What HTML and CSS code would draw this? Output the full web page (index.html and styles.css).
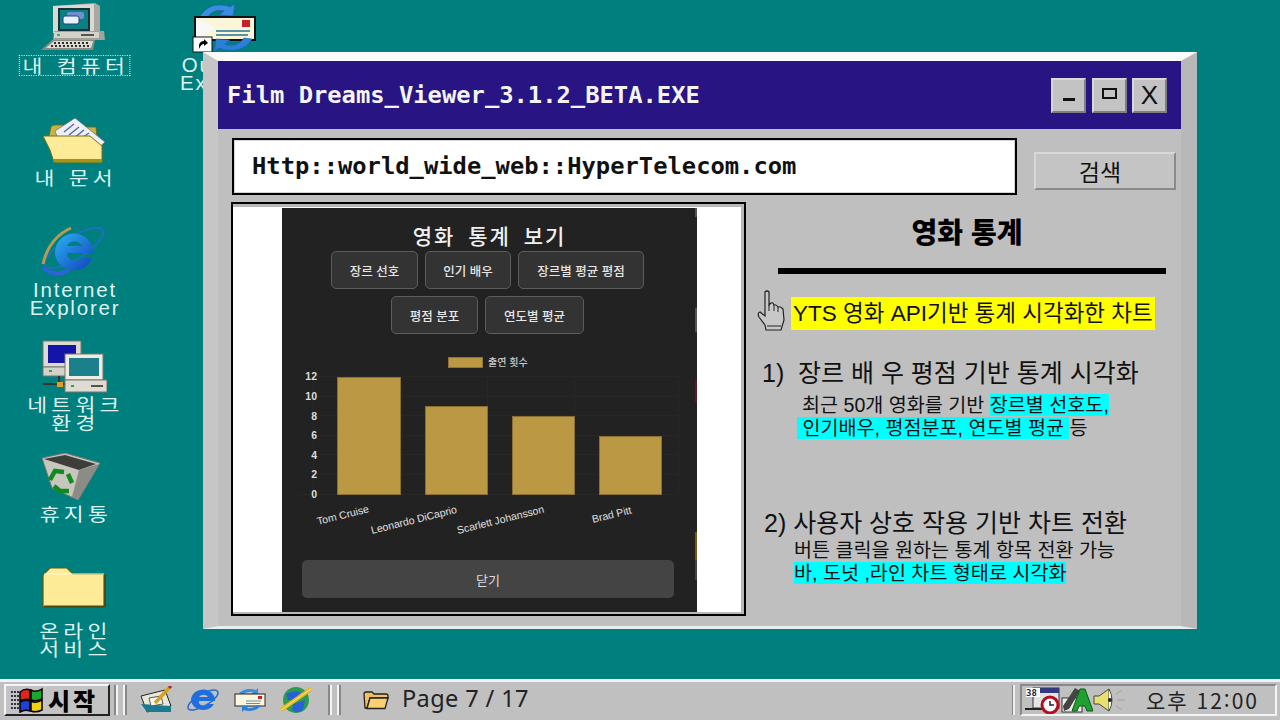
FILE: index.html
```html
<!DOCTYPE html>
<html lang="ko">
<head>
<meta charset="utf-8">
<title>Film Dreams Viewer</title>
<link rel="stylesheet" href="styles.css">
</head>
<body>
<main class="desktop">
  <div class="icon icon-computer">
    <svg class="glyph" width="66" height="50" viewBox="0 0 66 50">
      <path d="M12 3 L54 0 L59 3 L59 30 L12 30Z" fill="#a8a8a0"/>
      <path d="M12 3 L53 1 L53 30 L12 30Z" fill="#d9d9d1"/>
      <rect x="17" y="5" width="32" height="23" fill="#17323c"/>
      <rect x="19" y="7" width="28" height="19" fill="#0c8080"/>
      <rect x="26" y="9" width="17" height="7" rx="2" fill="#6f8fd0"/>
      <rect x="22" y="13" width="16" height="8" rx="2" fill="#e8f0f8" stroke="#20408a"/>
      <path d="M13 28 H63 L64 37 L12 37Z" fill="#a2a29a"/>
      <path d="M13 29 H58 L58 35 H13Z" fill="#d2d2ca"/>
      <rect x="16" y="31" width="3" height="2" fill="#28c050"/>
      <rect x="40" y="31" width="13" height="2" fill="#55554f"/>
      <path d="M0 47 L11 37 H54 L52 47Z" fill="#8b8b84"/>
      <path d="M5 45 L13 38 H52 L50 45Z" fill="#dcdcd4"/>
      <path d="M10 43 H48 M13 40 H49" stroke="#2f2f2f" stroke-width="2" stroke-dasharray="2 2"/>
    </svg>
    <div class="label label-focus">내 컴퓨터</div>
  </div>

  <div class="icon icon-outlook">
    <svg class="glyph" width="66" height="50" viewBox="0 0 66 50">
      <path d="M7 15 C13 3 26 -1 38 4 L43 1 L41 13 L27 12 L32 8 C24 6 18 9 14 17Z" fill="#3a8de0" stroke="#1c5cae" stroke-width=".6"/>
      <rect x="2" y="13" width="62" height="25" fill="#111"/>
      <rect x="4" y="15" width="58" height="21" fill="#fbf6d8"/>
      <path d="M4 15 L24 25 L4 36Z" fill="#f8f8f8"/>
      <rect x="50" y="17" width="8" height="7" fill="#c81f2c"/>
      <path d="M24 28 H58 M24 32 H56" stroke="#5a92a8" stroke-width="2"/>
      <path d="M60 36 C54 47 40 50 27 45 L22 49 L24 36 L38 37 L33 41 C41 44 48 41 52 35Z" fill="#2c7fd8" stroke="#1c5cae" stroke-width=".6"/>
      <rect x="1" y="34" width="19" height="15" fill="#fff" stroke="#111"/>
      <path d="M7 46 L7 42 Q8 38 12 38 L12 36 L16 40 L12 43 L12 41 Q9 41 7 46Z" fill="#000"/>
    </svg>
    <div class="label label-out">Outlook<br>Express</div>
  </div>

  <div class="icon icon-docs">
    <svg class="glyph" width="64" height="46" viewBox="0 0 64 46">
      <path d="M7 18 L9 9 Q10 7 13 7 H22 L25 9 H54 L56 30 H8Z" fill="#c9b344" stroke="#6f6410" stroke-width=".8"/>
      <path d="M13 13 L33 0 L63 24 L52 34 L18 26Z" fill="#eef0f8" stroke="#6a6a6a" stroke-width=".7"/>
      <path d="M22 14 L32 6 M27 17 L37 9 M32 20 L42 12 M37 22 L47 15" stroke="#5666aa" stroke-width="1.4"/>
      <path d="M1 18 H48 L60 28 L60 44 H12 L8 32Z" fill="#fdeb98" stroke="#7b7014" stroke-width="1"/>
      <path d="M12 44.500 H60 V41 H11Z" fill="#a49316"/>
    </svg>
    <div class="label">내 문서</div>
  </div>

  <div class="icon icon-ie">
    <svg class="glyph" width="66" height="50" viewBox="0 0 66 50">
      <defs>
        <linearGradient id="ieg" x1="0" y1="0" x2="1" y2="1">
          <stop offset="0" stop-color="#28b4f0"/>
          <stop offset="1" stop-color="#1440c0"/>
        </linearGradient>
      </defs>
      <ellipse cx="33" cy="22" rx="34" ry="11" transform="rotate(-32 33 22)" fill="none" stroke="#2a6bd0" stroke-width="2" opacity=".75"/>
      <path d="M14 26 a19 19 0 1 1 38 1 h-26 a9 8 0 0 0 16 5 h9 a19 18 0 0 1 -37 -6Z M26 20 h15 a8 7 0 0 0 -15 0Z" fill="url(#ieg)" fill-rule="evenodd"/>
      <path d="M2 38 Q8 12 30 2" fill="none" stroke="#b79a54" stroke-width="3"/>
      <path d="M2 42 Q14 52 28 44" fill="none" stroke="#2b64d6" stroke-width="4"/>
    </svg>
    <div class="label label-latin">Internet<br>Explorer</div>
  </div>

  <div class="icon icon-network">
    <svg class="glyph" width="66" height="54" viewBox="0 0 66 54">
      <rect x="2" y="1" width="38" height="26" fill="#dedcd2" stroke="#77776f"/>
      <rect x="7" y="5" width="28" height="18" fill="#1414a8"/>
      <rect x="2" y="27" width="36" height="9" fill="#d4d2c8" stroke="#77776f"/>
      <rect x="8" y="30" width="3" height="2" fill="#18b040"/>
      <path d="M18 36 V44 M2 44 H40" stroke="#333" stroke-width="2"/>
      <rect x="16" y="42" width="6" height="5" fill="#e0a020"/>
      <rect x="24" y="14" width="38" height="26" fill="#eeece2" stroke="#77776f"/>
      <rect x="28" y="18" width="30" height="18" fill="#1c7f8c"/>
      <rect x="24" y="40" width="42" height="12" fill="#dedcd2" stroke="#77776f"/>
      <rect x="30" y="45" width="3" height="2" fill="#18b040"/>
      <rect x="50" y="45" width="12" height="2" fill="#55554f"/>
    </svg>
    <div class="label">네트워크<br>환경</div>
  </div>

  <div class="icon icon-recycle">
    <svg class="glyph" width="60" height="48" viewBox="0 0 60 48">
      <path d="M1 5 L24 0 L59 10 L37 47 L11 35Z" fill="#c6c6bc" stroke="#77776f"/>
      <path d="M3 6 L24 2 L55 11 L38 17Z" fill="#3d3d3a"/>
      <path d="M38 17 L58 11 L37 47 L31 44Z" fill="#8c8c86"/>
      <g fill="none" stroke="#108a20" stroke-width="4.500">
        <path d="M9 27 L14 18 L23 19"/>
        <path d="M13 33 L19 38 L28 38"/>
        <path d="M27 21 L31 30"/>
      </g>
    </svg>
    <div class="label">휴지통</div>
  </div>

  <div class="icon icon-online">
    <svg class="glyph" width="64" height="41" viewBox="0 0 64 41">
      <path d="M1 40 V8 L8 1 H25 L31 7 H62 V40Z" fill="#fdeb98" stroke="#5f5a12" stroke-width="1.2"/>
      <path d="M2 7 H62" stroke="#fffbd0"/>
      <path d="M2 39.500 H63 M63 8 V40" stroke="#4b4a10" stroke-width="2"/>
    </svg>
    <div class="label">온라인<br>서비스</div>
  </div>

  <section class="window">
    <header class="titlebar">
      <h1 class="title">Film Dreams_Viewer_3.1.2_BETA.EXE</h1>
      <div class="controls">
        <button class="ctl"><span class="ctl-min"></span></button>
        <button class="ctl ctl-mid"><span class="ctl-max"></span></button>
        <button class="ctl ctl-x">X</button>
      </div>
    </header>

    <div class="addressrow">
      <div class="address">Http::world_wide_web::HyperTelecom.com</div>
      <button class="search">검색</button>
    </div>

    <div class="content">
      <div class="frame">
        <div class="modal">
          <h2 class="modal-title">영화 통계 보기</h2>
          <div class="tabs">
            <span class="tab tab-a">장르 선호</span>
            <span class="tab tab-d">인기 배우</span>
            <span class="tab tab-b">장르별 평균 평점</span>
          </div>
          <div class="tabs tabs-2">
            <span class="tab tab-a">평점 분포</span>
            <span class="tab tab-c">연도별 평균</span>
          </div>
          <svg class="chart" width="415" height="192" viewBox="0 0 415 192">
            <rect x="165.500" y="2.500" width="34" height="10" fill="#bb9944" stroke="#8f7433"/>
            <text x="205" y="11" class="legend">출연 횟수</text>
            <g stroke="#272727" fill="none">
              <path d="M30 21.500 H395 M30 41.500 H395 M30 60.500 H395 M30 80.500 H395 M30 99.500 H395 M30 119.500 H395"/>
              <path d="M16 139.500 H395 M30.500 21 V139 M117.500 21 V139 M204.500 21 V139 M291.500 21 V139 M395.500 21 V139"/>
            </g>
            <g class="ytick" text-anchor="end">
              <text x="34" y="25">12</text>
              <text x="34" y="45">10</text>
              <text x="34" y="65">8</text>
              <text x="34" y="84">6</text>
              <text x="34" y="104">4</text>
              <text x="34" y="123">2</text>
              <text x="34" y="143">0</text>
            </g>
            <g fill="#bb9944" stroke="#8a6f30">
              <rect x="54.500" y="22.500" width="63" height="117"/>
              <rect x="142.500" y="51.500" width="62" height="88"/>
              <rect x="229.500" y="61.500" width="62" height="78"/>
              <rect x="316.500" y="81.500" width="62" height="58"/>
            </g>
            <g class="xtick">
              <text transform="translate(35 170) rotate(-14)">Tom Cruise</text>
              <text transform="translate(89 179) rotate(-14)">Leonardo DiCaprio</text>
              <text transform="translate(175 179) rotate(-14)">Scarlett Johansson</text>
              <text transform="translate(310 168) rotate(-14)">Brad Pitt</text>
            </g>
          </svg>
          <button class="close">닫기</button>
        </div>
      </div>

      <article class="notes">
        <h2 class="notes-title">영화 통계</h2>
        <hr class="rule">
        <div class="lead">
          <svg class="hand" width="28" height="42" viewBox="0 0 28 42">
            <path d="M8 2 Q10 0 12 2 L12 15 L14 13 Q16 12 17 15 Q19 14 21 17 Q23 16 26 19 L27 30 L24 40 H9 L8 35 L2 27 Q0 23 3 22 L8 26Z" fill="#c8c8c8" stroke="#222" stroke-width="1.200"/>
            <path d="M12 15 V21 M17 15 V21 M21 17 V22 M10 36 H24" stroke="#222" stroke-width="1"/>
          </svg>
          <span class="mark-yellow">YTS 영화 API기반 통계 시각화한 차트</span>
        </div>
        <h3 class="point point-1"><span class="num">1)</span>장르 배 우 평점 기반 통계 시각화</h3>
        <p class="desc desc-1">최근 50개 영화를 기반 <span class="mark-cyan">장르별 선호도,</span></p>
        <p class="desc desc-1b"><span class="mark-cyan"> 인기배우, 평점분포, 연도별 평균 </span>등</p>
        <h3 class="point point-2">2) 사용자 상호 작용 기반 차트 전환</h3>
        <p class="desc desc-2">버튼 클릭을 원하는 통계 항목 전환 가능</p>
        <p class="desc desc-2"><span class="mark-cyan">바, 도넛 ,라인 차트 형태로 시각화</span></p>
      </article>
    </div>
  </section>
</main>

<footer class="taskbar">
  <button class="start">
    <svg width="34" height="26" viewBox="0 0 34 26">
      <path d="M1 5 H10 M1 9 H10 M1 13 H10 M1 17 H10 M1 21 H10" stroke="#334" stroke-width="2" stroke-dasharray="2 1"/>
      <path d="M10 5 Q15 1 20 3 L20 13 Q15 11 10 14Z" fill="#e02418" stroke="#000" stroke-width="1.500"/>
      <path d="M21 3 Q26 6 32 2 L32 12 Q26 15 21 13Z" fill="#18a830" stroke="#000" stroke-width="1.500"/>
      <path d="M10 15 Q15 12 20 14 L20 24 Q15 22 10 25Z" fill="#2040d8" stroke="#000" stroke-width="1.500"/>
      <path d="M21 14 Q26 17 32 13 L32 23 Q26 26 21 24Z" fill="#f0d010" stroke="#000" stroke-width="1.500"/>
    </svg>
    <span class="start-text">시작</span>
  </button>
  <span class="grip"></span>
  <div class="quick">
    <svg width="34" height="28" viewBox="0 0 34 28">
      <path d="M2 10 L26 4 L32 20 L8 26Z" fill="#e8e8d8" stroke="#222"/>
      <path d="M2 18 L8 26 L32 26 L32 20Z" fill="#1a7a90"/>
      <path d="M10 12 L22 10 L24 18 L12 20Z" fill="#f8f8e8" stroke="#555"/>
      <path d="M16 17 L30 2" stroke="#d8a020" stroke-width="3.500"/>
      <path d="M30 2 L32 0" stroke="#b02020" stroke-width="3"/>
    </svg>
    <svg width="34" height="28" viewBox="0 0 34 28">
      <ellipse cx="17" cy="14" rx="17" ry="6" transform="rotate(-30 17 14)" fill="none" stroke="#2a6bd0" stroke-width="1.500"/>
      <path d="M5 14 a12 11 0 1 1 24 1 h-16 a5 4 0 0 0 9 3 h6 a12 10 0 0 1 -23 -4Z M13 11 h9 a5 4 0 0 0 -9 0Z" fill="#1f6ee0" fill-rule="evenodd"/>
    </svg>
    <svg width="32" height="26" viewBox="0 0 32 26">
      <path d="M5 6 Q12 0 22 3 L24 1 L24 7 L17 7 L19 5 Q13 4 9 8Z" fill="#3a8de0"/>
      <rect x="1" y="7" width="30" height="12" fill="#fbf6e0" stroke="#222"/>
      <rect x="24" y="9" width="4" height="3" fill="#c81f2c"/>
      <path d="M12 14 H27 M12 16.500 H26" stroke="#5a92a8"/>
      <path d="M27 19 Q20 26 10 23 L8 25 L8 19 L15 19 L13 21 Q19 22 23 18Z" fill="#2c7fd8"/>
    </svg>
    <svg width="34" height="28" viewBox="0 0 34 28">
      <circle cx="17" cy="14" r="13" fill="#2e9c50"/>
      <path d="M7 8 Q14 4 22 6 L16 14 L9 14Z M14 18 L26 14 L24 24 Q18 28 13 24Z" fill="#2860d8"/>
      <path d="M2 24 L32 3" stroke="#e8b820" stroke-width="4"/>
      <path d="M2 24 L32 3" stroke="#f8e890" stroke-width="1"/>
    </svg>
  </div>
  <span class="grip"></span>
  <div class="task">
    <svg width="26" height="20" viewBox="0 0 26 20">
      <path d="M2 18 L1 4 Q1 2 3 2 H9 L11 4 H23 Q25 4 25 6 L25 8 H7 L4 18Z" fill="#f0c060" stroke="#222" stroke-width="1.300"/>
      <path d="M4 18.500 L7 8 H25 L22 18.500Z" fill="#fbd070" stroke="#222" stroke-width="1.300"/>
    </svg>
    <span class="task-text">Page 7 / 17</span>
  </div>
  <div class="tray-wrap">
    <span class="tray-grip"></span>
    <div class="tray">
      <svg width="36" height="28" viewBox="0 0 36 28">
        <rect x="8" y="2" width="26" height="20" fill="#e4e4e4" stroke="#334"/>
        <rect x="8" y="2" width="26" height="5" fill="#333a80"/>
        <rect x="1" y="2" width="14" height="9" fill="#fff"/>
        <text x="1" y="10" class="tray-mini">38</text>
        <path d="M0 23 H20" stroke="#222" stroke-width="2"/>
        <circle cx="25" cy="19" r="8" fill="#fff" stroke="#b01020" stroke-width="3"/>
        <path d="M25 15 V19 H29" stroke="#222" stroke-width="1.500" fill="none"/>
      </svg>
      <svg width="32" height="28" viewBox="0 0 32 28">
        <rect x="1" y="12" width="20" height="14" fill="#eee" stroke="#333"/>
        <path d="M2 20 L14 2 L19 5 L8 23 L3 25Z" fill="#444"/>
        <path d="M19 3 L11 25 H16 L18 20 H24 L26 25 H32 L24 3Z" fill="#20a030" stroke="#0b5a14"/>
      </svg>
      <svg width="34" height="28" viewBox="0 0 34 28">
        <path d="M1 10 H6 L16 3 V25 L6 18 H1Z" fill="#e8e070" stroke="#444"/>
        <path d="M16 3 Q22 14 16 25" fill="#fff" stroke="#444"/>
        <circle cx="17" cy="14" r="2" fill="#222"/>
        <path d="M24 14 H32 M23 8 L29 4 M23 20 L29 24" stroke="#aaa" stroke-width="1.500"/>
      </svg>
      <span class="clock">오후 12:00</span>
    </div>
  </div>
</footer>
</body>
</html>
```
FILE: styles.css
```css
* { box-sizing: border-box; }
html, body { margin: 0; padding: 0; }
body {
  width: 1280px;
  height: 720px;
  overflow: hidden;
  display: flex;
  flex-direction: column;
  background: #007f7f;
  font-family: "Noto Sans CJK KR", "Noto Sans", sans-serif;
}
button { font-family: inherit; padding: 0; }
h1, h2, h3, p { margin: 0; }

/* desktop */
.desktop { position: relative; flex: 1; }
.icon {
  position: absolute;
  width: 130px;
  display: flex;
  flex-direction: column;
  align-items: center;
}
.glyph { display: block; }
.label {
  color: #dff3f0;
  font-size: 18px;
  line-height: 18px;
  letter-spacing: 3.500px;
  padding-left: 3px;
  text-align: center;
  white-space: nowrap;
  transform: scaleX(1.2);
}
.label-latin, .label-out {
  font-family: "Liberation Sans", sans-serif;
  font-size: 20.500px;
  letter-spacing: 1.800px;
  padding-left: 2px;
  transform: none;
}
.label-out {
  align-self: flex-start;
  margin-top: 3px;
  padding: 0;
}
.label-focus {
  margin-top: 2px;
  height: 21px;
  line-height: 20px;
  position: relative;
}
.label-focus::after {
  content: "";
  position: absolute;
  left: 0;
  right: -1px;
  top: 0;
  bottom: 0;
  border: 1px dotted #c9ddd8;
}
.icon-computer { left: 9px; top: 3px; }
.icon-outlook { left: 180px; top: 3px; width: 78px; align-items: flex-end; }
.icon-docs { left: 9px; top: 118px; }
.icon-docs .label { margin-top: 4px; }
.icon-ie { left: 9px; top: 226px; }
.icon-ie .label { margin-top: 5px; }
.icon-network { left: 9px; top: 340px; }
.icon-network .label { margin-top: 1px; }
.icon-recycle { left: 6px; top: 453px; }
.icon-recycle .label { margin-top: 3px; padding-left: 8px; }
.icon-online { left: 9px; top: 567px; }
.icon-online .label { margin-top: 13px; }

/* window */
.window {
  position: absolute;
  left: 203px;
  top: 52px;
  width: 994px;
  height: 577px;
  background: #bfbfbf;
  border-style: solid;
  border-width: 9px 16px 3px 15px;
  border-color: #fbfbfb #b8b8b8 #e8eeee #c6c6c6;
  display: flex;
  flex-direction: column;
}
.titlebar {
  height: 68px;
  flex: none;
  background: #281482;
  display: flex;
  align-items: center;
  justify-content: space-between;
  padding: 0 14px 0 9px;
}
.title {
  font-family: "DejaVu Sans Mono", monospace;
  font-size: 23.800px;
  font-weight: 700;
  color: #f4f4f4;
}
.controls { display: flex; gap: 5px; }
.ctl {
  width: 35px;
  height: 35px;
  background: #c3c3c3;
  border: 2px solid;
  border-color: #d9d9d9 #7f7f7f #7f7f7f #d9d9d9;
  display: flex;
  align-items: center;
  justify-content: center;
  color: #111;
}
.ctl-mid { margin-left: 1px; }
.ctl-min { width: 12px; height: 3px; background: #111; margin-top: 8px; }
.ctl-max { width: 15px; height: 11px; border: 2px solid #111; margin-bottom: 4px; }
.ctl-x {
  font-family: "Liberation Sans", sans-serif;
  font-size: 26px;
  font-weight: 400;
}
.addressrow {
  flex: none;
  display: flex;
  padding: 9px 5px 0 14px;
  justify-content: space-between;
  align-items: flex-start;
}
.address {
  width: 785px;
  height: 57px;
  background: #fff;
  border: 2px solid #000;
  box-shadow: inset 0 0 0 1px #d5d5d5;
  font-family: "DejaVu Sans Mono", monospace;
  font-size: 23.800px;
  font-weight: 700;
  color: #111;
  line-height: 53px;
  padding-left: 18px;
}
.search {
  margin-top: 14px;
  width: 142px;
  height: 38px;
  background: #c4c4c4;
  border: 2px solid;
  border-color: #d8d8d8 #8a8a8a #8a8a8a #d8d8d8;
  font-size: 23px;
  line-height: 30px;
  color: #111;
  padding-right: 10px;
}
.content {
  flex: 1;
  display: flex;
  padding: 7px 16px 0 13px;
  gap: 17px;
}
.frame {
  width: 515px;
  height: 414px;
  flex: none;
  background: #fff;
  border: 2px solid #000;
  box-shadow: inset 0 3px 0 #b8b8b8, inset -3px 0 0 #b8b8b8, inset 0 -2px 0 #b8b8b8;
  display: flex;
  padding: 4px 0 2px 49px;
}
.modal {
  width: 415px;
  background: #222;
  display: flex;
  flex-direction: column;
  align-items: center;
  position: relative;
}
.modal::after {
  content: "";
  position: absolute;
  top: 0;
  bottom: 0;
  right: 0;
  width: 2px;
  background: linear-gradient(to bottom,
    #555 0 9px, #222 9px 100px, #555 100px 124px, #222 124px 172px,
    #6a1228 172px 194px, #222 194px 324px, #6f5f10 324px 352px,
    #444 352px 372px, #222 372px);
}
.modal-title {
  color: #f0f0f0;
  font-size: 21px;
  line-height: 28px;
  font-weight: 500;
  letter-spacing: 2px;
  word-spacing: 5px;
  margin-top: 13px;
}
.tabs { display: flex; gap: 7px; margin: 2px 4px 0 0; }
.tabs-2 { margin-top: 7px; }
.tab {
  height: 38px;
  border: 1px solid #5c5c5c;
  border-radius: 5px;
  background: #333;
  color: #e6e6e6;
  font-size: 12.500px;
  font-weight: 500;
  display: flex;
  align-items: center;
  justify-content: center;
}
.tab-a { width: 87px; }
.tab-d { width: 86px; }
.tab-b { width: 126px; }
.tab-c { width: 99px; }
.chart { display: block; margin: 21px 0 0 2px; flex: none; }
.legend { fill: #ccc; font-size: 10px; font-weight: 500; }
.ytick { fill: #ddd; font-size: 10.500px; font-family: "Liberation Sans", sans-serif; font-weight: 700; }
.xtick { fill: #e0e0e0; font-size: 10.500px; font-family: "Liberation Sans", sans-serif; }
.close {
  margin: 13px 3px 0 0;
  width: 372px;
  height: 38px;
  background: #444;
  color: #ddd;
  border: 0;
  border-radius: 5px;
  font-size: 13px;
}

/* notes */
.notes {
  flex: 1;
  min-width: 0;
  color: #111;
  font-family: "Liberation Sans", "Noto Sans CJK KR", sans-serif;
}
.notes-title {
  text-align: center;
  font-family: "Noto Sans CJK KR", sans-serif;
  font-size: 28px;
  font-weight: 900;
  line-height: 36px;
  color: #000;
  margin: 11px 0 0 6px;
}
.rule {
  margin: 19px 0 0 15px;
  width: 388px;
  height: 6px;
  border: 0;
  background: #000;
}
.lead { display: flex; align-items: flex-start; margin: 16px 0 0 -6px; gap: 6px; }
.hand { flex: none; }
.mark-yellow {
  background: #ffff00;
  font-size: 22.500px;
  line-height: 33px;
  height: 33px;
  padding: 0 2px;
  margin-top: 7px;
  white-space: nowrap;
}
.mark-cyan { background: #00ffff; white-space: pre; }
.point {
  font-size: 25px;
  font-weight: 400;
  line-height: 32px;
  white-space: nowrap;
}
.num { display: inline-block; width: 36px; }
.point-1 { margin: 25px 0 0 -1px; }
.point-2 { margin: 67px 0 0 1px; }
.desc { font-size: 19.600px; line-height: 23px; white-space: nowrap; }
.desc-1 { margin: 5px 0 0 39px; }
.desc-1b { margin: 0 0 0 34px; }
.desc-2 { margin: 0 0 0 31px; }

/* taskbar */
.taskbar {
  height: 41px;
  flex: none;
  background: #c0c0c0;
  border-top: 3px solid #f2f2f2;
  display: flex;
  align-items: center;
  padding: 0 3px 2px 4px;
}
.start {
  width: 106px;
  height: 32px;
  background: #c3c3c3;
  border: 2px solid;
  border-color: #f4f4f4 #222 #222 #f4f4f4;
  display: flex;
  align-items: center;
  gap: 4px;
  padding-left: 4px;
  flex: none;
}
.start-text { font-size: 24px; font-weight: 900; letter-spacing: 3px; color: #000; line-height: 26px; }
.grip {
  width: 13px;
  height: 30px;
  margin-left: 4px;
  border-left: 2px solid #888;
  border-right: 2px solid #888;
  background: linear-gradient(to right, #f4f4f4 0 2px, transparent 2px 7px, #f4f4f4 7px);
  flex: none;
}
.quick {
  width: 197px;
  display: flex;
  justify-content: space-between;
  align-items: center;
  padding: 0 11px 0 12px;
  flex: none;
}
.task { display: flex; align-items: center; gap: 13px; padding-left: 22px; flex: 1; }
.task-text { font-size: 23.500px; letter-spacing: .4px; color: #222; line-height: 30px; font-family: "Noto Sans", sans-serif; white-space: nowrap; margin-top: -4px; }
.tray-wrap { display: flex; align-items: center; gap: 5px; flex: none; }
.tray-grip { width: 3px; height: 30px; background: #eee; border-left: 1px solid #888; }
.tray {
  width: 257px;
  height: 32px;
  border: 2px solid;
  border-color: #888 #f4f4f4 #f4f4f4 #888;
  display: flex;
  align-items: center;
  padding-left: 3px;
}
.tray-mini { font-family: "DejaVu Sans Mono", monospace; font-size: 9px; fill: #224; font-weight: 700; }
.clock { font-size: 21px; color: #222; margin-left: 19px; letter-spacing: 2px; white-space: nowrap; }
```
